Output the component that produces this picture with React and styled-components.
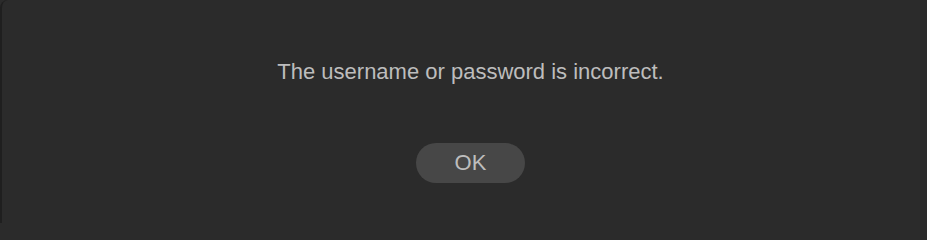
import React from 'react';
import styled, { createGlobalStyle } from 'styled-components';

const GlobalStyle = createGlobalStyle`
  html, body {
    margin: 0;
    padding: 0;
    height: 223px;
    overflow: hidden;
    background: #2b2b2b;
  }
  body {
    font-family: "Liberation Sans", Arial, sans-serif;
  }
`;

const Dialog = styled.div`
  box-sizing: border-box;
  width: 927px;
  height: 223px;
  background: #2b2b2b;
  border-left: 2px solid #1f1f1f;
  border-top-left-radius: 8px;
  display: flex;
  flex-direction: column;
  align-items: center;
  padding-top: 57px;
  padding-left: 12px;
`;

const Message = styled.p`
  margin: 0;
  font-size: 22px;
  line-height: 30px;
  color: #bdbdbd;
`;

const OkButton = styled.button`
  margin-top: 56px;
  width: 109px;
  height: 40px;
  border: none;
  border-radius: 20px;
  background: #474747;
  color: #bdbdbd;
  font-family: "Liberation Sans", Arial, sans-serif;
  font-size: 22px;
  cursor: pointer;
`;

const App = () => {
  return (
    <>
      <GlobalStyle />
      <Dialog>
        <Message>The username or password is incorrect.</Message>
        <OkButton>OK</OkButton>
      </Dialog>
    </>
  );
};

export default App;
